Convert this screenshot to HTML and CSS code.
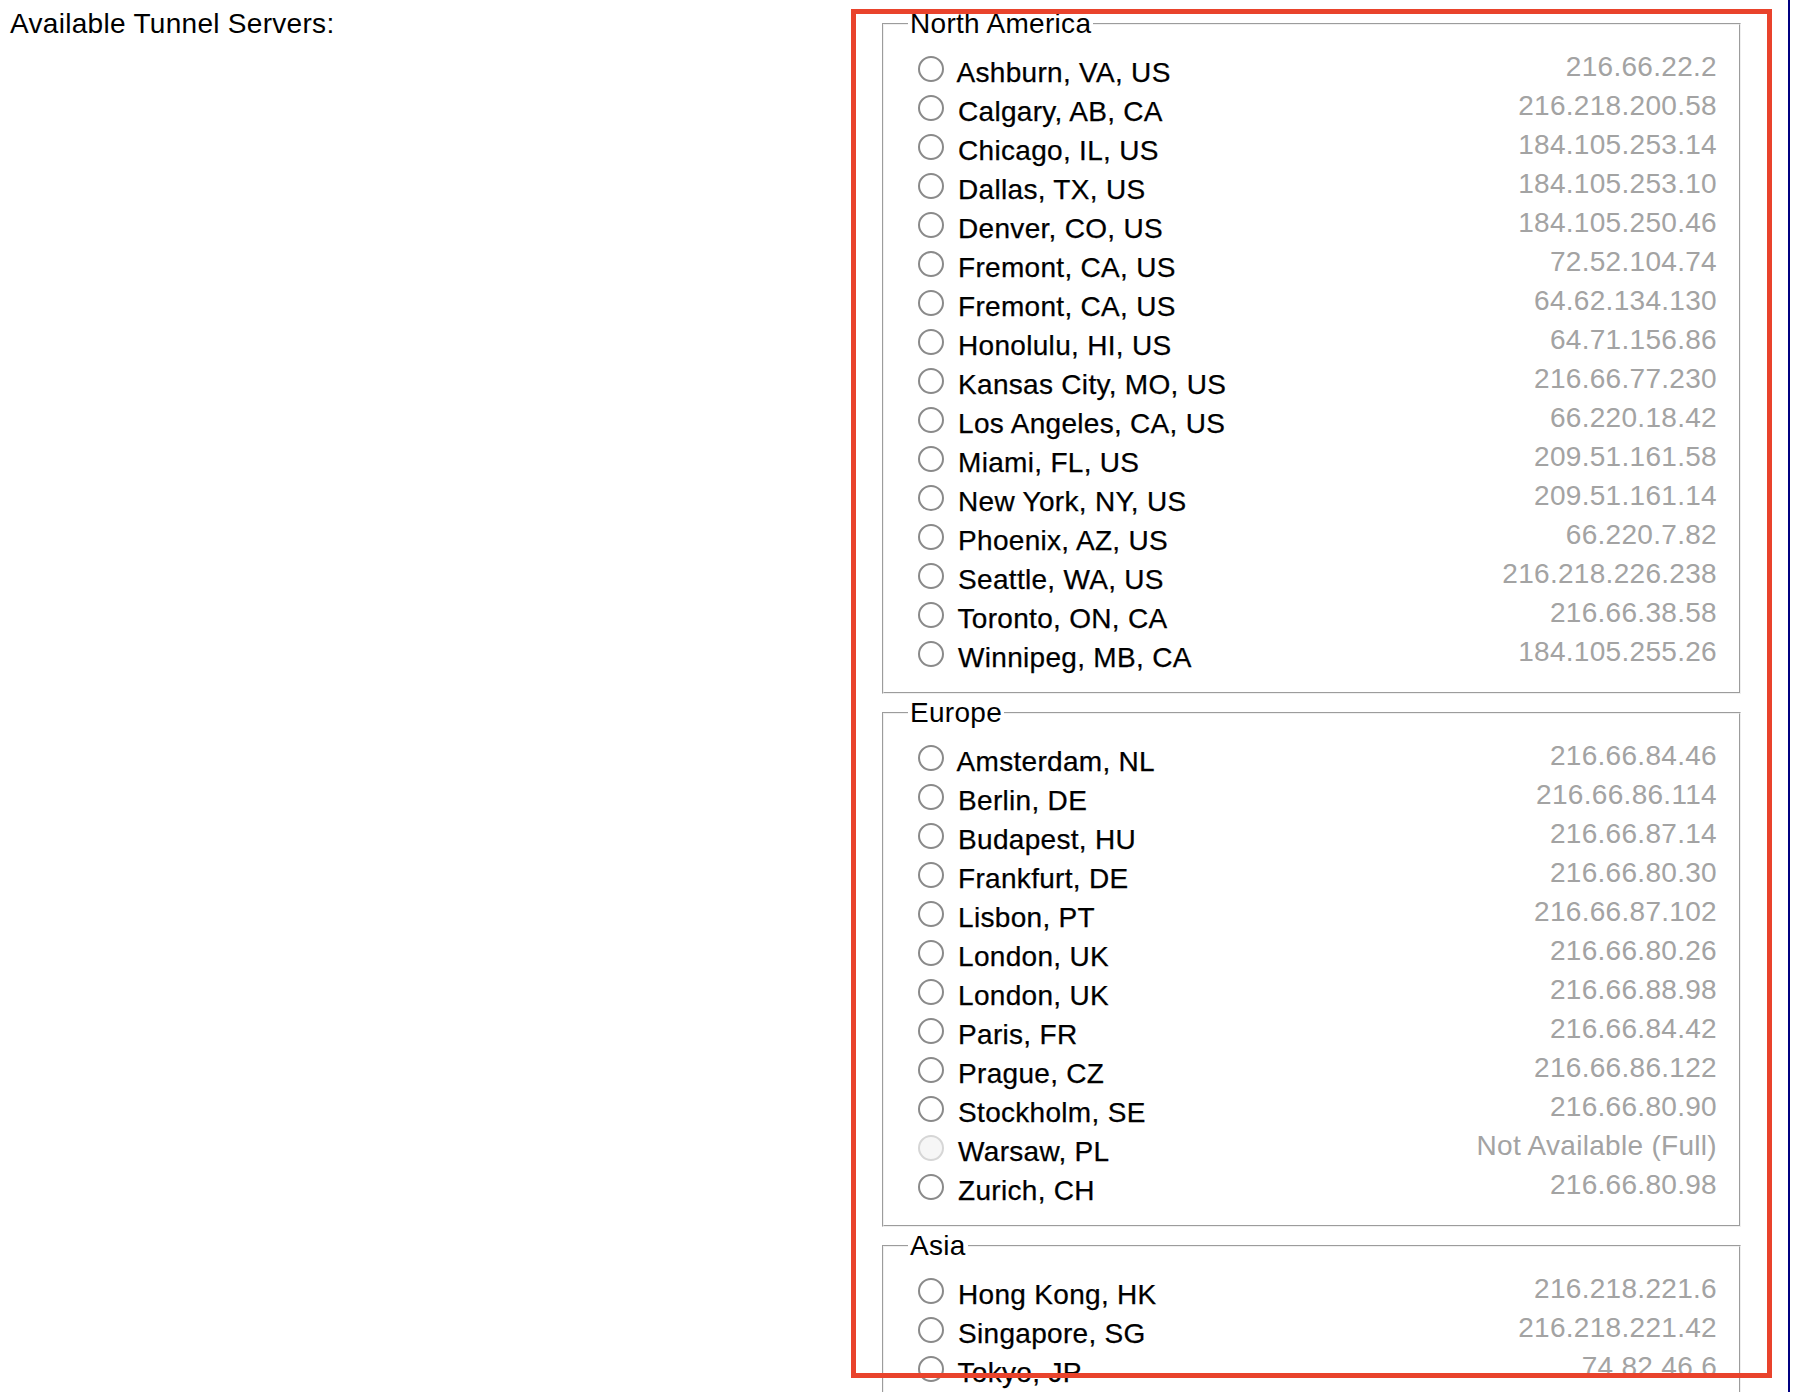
FILE: index.html
```html
<!DOCTYPE html>
<html lang="en">
<head>
<meta charset="utf-8">
<title>Tunnel Servers</title>
<link rel="stylesheet" href="styles.css">
</head>
<body>
<div class="page">
  <div class="caption">Available Tunnel Servers:</div>
  <div class="servers">
    <fieldset class="region">
      <legend>North America</legend>
      <div class="row"><label><input class="radio" type="radio" name="tserv"> Ashburn, VA, US</label><span class="ip">216.66.22.2</span></div>
      <div class="row"><label><input class="radio" type="radio" name="tserv"> Calgary, AB, CA</label><span class="ip">216.218.200.58</span></div>
      <div class="row"><label><input class="radio" type="radio" name="tserv"> Chicago, IL, US</label><span class="ip">184.105.253.14</span></div>
      <div class="row"><label><input class="radio" type="radio" name="tserv"> Dallas, TX, US</label><span class="ip">184.105.253.10</span></div>
      <div class="row"><label><input class="radio" type="radio" name="tserv"> Denver, CO, US</label><span class="ip">184.105.250.46</span></div>
      <div class="row"><label><input class="radio" type="radio" name="tserv"> Fremont, CA, US</label><span class="ip">72.52.104.74</span></div>
      <div class="row"><label><input class="radio" type="radio" name="tserv"> Fremont, CA, US</label><span class="ip">64.62.134.130</span></div>
      <div class="row"><label><input class="radio" type="radio" name="tserv"> Honolulu, HI, US</label><span class="ip">64.71.156.86</span></div>
      <div class="row"><label><input class="radio" type="radio" name="tserv"> Kansas City, MO, US</label><span class="ip">216.66.77.230</span></div>
      <div class="row"><label><input class="radio" type="radio" name="tserv"> Los Angeles, CA, US</label><span class="ip">66.220.18.42</span></div>
      <div class="row"><label><input class="radio" type="radio" name="tserv"> Miami, FL, US</label><span class="ip">209.51.161.58</span></div>
      <div class="row"><label><input class="radio" type="radio" name="tserv"> New York, NY, US</label><span class="ip">209.51.161.14</span></div>
      <div class="row"><label><input class="radio" type="radio" name="tserv"> Phoenix, AZ, US</label><span class="ip">66.220.7.82</span></div>
      <div class="row"><label><input class="radio" type="radio" name="tserv"> Seattle, WA, US</label><span class="ip">216.218.226.238</span></div>
      <div class="row"><label><input class="radio" type="radio" name="tserv"> Toronto, ON, CA</label><span class="ip">216.66.38.58</span></div>
      <div class="row"><label><input class="radio" type="radio" name="tserv"> Winnipeg, MB, CA</label><span class="ip">184.105.255.26</span></div>
    </fieldset>
    <fieldset class="region">
      <legend>Europe</legend>
      <div class="row"><label><input class="radio" type="radio" name="tserv"> Amsterdam, NL</label><span class="ip">216.66.84.46</span></div>
      <div class="row"><label><input class="radio" type="radio" name="tserv"> Berlin, DE</label><span class="ip">216.66.86.114</span></div>
      <div class="row"><label><input class="radio" type="radio" name="tserv"> Budapest, HU</label><span class="ip">216.66.87.14</span></div>
      <div class="row"><label><input class="radio" type="radio" name="tserv"> Frankfurt, DE</label><span class="ip">216.66.80.30</span></div>
      <div class="row"><label><input class="radio" type="radio" name="tserv"> Lisbon, PT</label><span class="ip">216.66.87.102</span></div>
      <div class="row"><label><input class="radio" type="radio" name="tserv"> London, UK</label><span class="ip">216.66.80.26</span></div>
      <div class="row"><label><input class="radio" type="radio" name="tserv"> London, UK</label><span class="ip">216.66.88.98</span></div>
      <div class="row"><label><input class="radio" type="radio" name="tserv"> Paris, FR</label><span class="ip">216.66.84.42</span></div>
      <div class="row"><label><input class="radio" type="radio" name="tserv"> Prague, CZ</label><span class="ip">216.66.86.122</span></div>
      <div class="row"><label><input class="radio" type="radio" name="tserv"> Stockholm, SE</label><span class="ip">216.66.80.90</span></div>
      <div class="row"><label><input class="radio" type="radio" name="tserv" disabled> Warsaw, PL</label><span class="ip">Not Available (Full)</span></div>
      <div class="row"><label><input class="radio" type="radio" name="tserv"> Zurich, CH</label><span class="ip">216.66.80.98</span></div>
    </fieldset>
    <fieldset class="region">
      <legend>Asia</legend>
      <div class="row"><label><input class="radio" type="radio" name="tserv"> Hong Kong, HK</label><span class="ip">216.218.221.6</span></div>
      <div class="row"><label><input class="radio" type="radio" name="tserv"> Singapore, SG</label><span class="ip">216.218.221.42</span></div>
      <div class="row"><label><input class="radio" type="radio" name="tserv"> Tokyo, JP</label><span class="ip">74.82.46.6</span></div>
    </fieldset>
  </div>
</div>
<div class="highlight"></div>
</body>
</html>
```

FILE: styles.css
```css
html, body {
  margin: 0;
  padding: 0;
  background: #fff;
}

body {
  font-family: "Liberation Sans", Arial, sans-serif;
  font-size: 28px;
  letter-spacing: 0.3px;
  color: #000;
  overflow: hidden;
}

/* two columns: caption on the left, server list on the right */
.page {
  display: flex;
  width: 1788px;
  height: 100vh;
  border-right: 2px solid #000080;
  overflow: hidden;
}

.caption {
  flex: 0 0 882px;
  box-sizing: border-box;
  padding: 8px 0 0 10px;
  line-height: 32px;
}

.servers {
  flex: 0 0 859px;
  padding-top: 8px;
}

.region {
  margin: 0 0 3px;
  padding: 13px 22px 15px 24px;
  border: 2px groove #f0f0f0;
  min-width: 0;
}

.region legend {
  padding: 0 2px;
  line-height: 32px;
}

.row {
  display: flex;
  height: 39px;
}

.row label {
  line-height: 39px;
  white-space: nowrap;
  -webkit-text-stroke: 0.25px #000;
}

.radio {
  appearance: none;
  -webkit-appearance: none;
  box-sizing: border-box;
  width: 26px;
  height: 26px;
  margin: 0 6px 0 10px;
  border: 2px solid #8a8a8a;
  border-radius: 50%;
  background: #fff;
  vertical-align: baseline;
}

.radio:disabled {
  border-color: #d6d6d6;
  background: #f6f6f6;
}

.ip {
  margin-left: auto;
  align-self: flex-start;
  line-height: 27px;
  color: #a3a3a3;
  white-space: nowrap;
}

/* callout frame drawn over the server list */
.highlight {
  position: absolute;
  left: 851px;
  top: 9px;
  width: 921px;
  height: 1369px;
  box-sizing: border-box;
  border: 5px solid #e9432c;
  pointer-events: none;
}
```
